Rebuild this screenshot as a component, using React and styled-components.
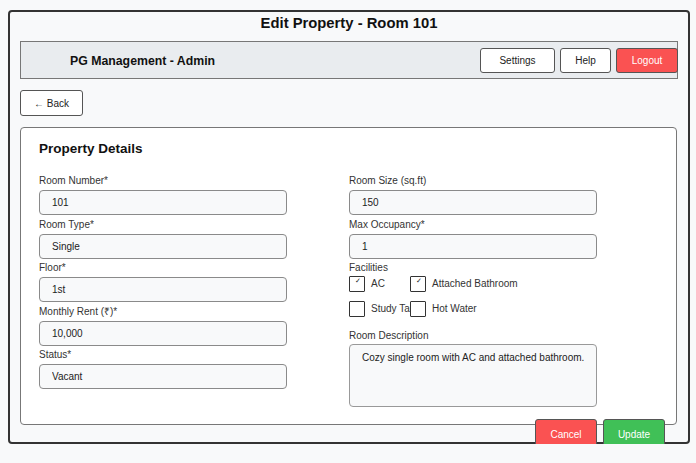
import React from "react";
import styled, { createGlobalStyle } from "styled-components";

const GlobalStyle = createGlobalStyle`
  body {
    margin: 0;
    background: #f8f9fa;
    font-family: "Liberation Sans", Arial, sans-serif;
    color: #222;
  }
`;

const Frame = styled.div`
  box-sizing: border-box;
  width: 682px;
  height: 434px;
  margin: 10px 0 0 8px;
  padding: 0 10px;
  border: 2px solid #333;
  border-radius: 4px;
  background: #f8f9fa;
`;

const Title = styled.h1`
  margin: 0;
  padding: 2px 0 9px;
  font-size: 14.8px;
  line-height: 18px;
  font-weight: 700;
  text-align: center;
  color: #111;
`;

const HeaderBar = styled.div`
  box-sizing: border-box;
  height: 38px;
  display: flex;
  align-items: center;
  justify-content: space-between;
  padding-left: 49px;
  background: #e9ecef;
  border: 1px solid #777;
`;

const Brand = styled.div`
  font-size: 12.3px;
  font-weight: 700;
  color: #111;
  margin-top: 2px;
`;

const Nav = styled.div`
  display: flex;
  gap: 5px;
  margin-right: -1px;
`;

const Button = styled.button`
  box-sizing: border-box;
  width: ${(p) => p.$w}px;
  height: ${(p) => p.$h || 25}px;
  padding: 0;
  border: 1px solid #555;
  border-radius: 3px;
  background: ${(p) => p.$bg || "#fff"};
  color: ${(p) => (p.$bg ? "#fff" : "#222")};
  font-family: "Liberation Sans", Arial, sans-serif;
  font-size: 10px;
  cursor: pointer;
`;

const BackRow = styled.div`
  padding: 11px 0;
`;

const Card = styled.div`
  box-sizing: border-box;
  margin-right: 1px;
  padding: 12px 18px 17px;
  background: #fff;
  border: 1px solid #777;
  border-radius: 4px;
`;

const CardTitle = styled.h2`
  margin: 0 0 18px;
  font-size: 13.5px;
  line-height: 17px;
  font-weight: 700;
  color: #111;
`;

const Grid = styled.div`
  display: grid;
  grid-template-columns: 248px 248px;
  column-gap: 62px;
  align-items: start;
`;

const Column = styled.div`
  display: flex;
  flex-direction: column;
`;

const Field = styled.div`
  display: flex;
  flex-direction: column;
  margin-bottom: ${(p) => (p.$after !== undefined ? p.$after : 3.5)}px;
`;

const Label = styled.label`
  font-size: 10px;
  line-height: 12px;
  color: #333;
  margin-bottom: ${(p) => (p.$gap !== undefined ? p.$gap : 3)}px;
`;

const Input = styled.input`
  box-sizing: border-box;
  width: 100%;
  height: 25px;
  padding: 0 12px;
  border: 1px solid #8a8a8a;
  border-radius: 4px;
  background: #f8f9fa;
  font-family: "Liberation Sans", Arial, sans-serif;
  font-size: 10px;
  color: #222;
  outline: none;
`;

const TextArea = styled.textarea`
  box-sizing: border-box;
  width: 100%;
  height: 63px;
  padding: 7px 2px 7px 12px;
  border: 1px solid #999;
  border-radius: 4px;
  background: #f8f9fa;
  font-family: "Liberation Sans", Arial, sans-serif;
  font-size: 10px;
  line-height: 12px;
  color: #222;
  resize: none;
  outline: none;
  overflow: hidden;
`;

const CheckGrid = styled.div`
  display: grid;
  grid-template-columns: 61px 61px;
  row-gap: 9px;
`;

const CheckItem = styled.div`
  display: flex;
  align-items: center;
  gap: 6px;
  white-space: nowrap;
  font-size: 10px;
  line-height: 12px;
  color: #333;
`;

const Box = styled.span`
  box-sizing: border-box;
  flex: none;
  width: 16px;
  height: 16px;
  display: flex;
  justify-content: center;
  align-items: flex-start;
  padding: 1px 0 0 2px;
  border: 1px solid #333;
  border-radius: 1px;
  background: #fff;
  font-family: "DejaVu Sans", sans-serif;
  font-size: 7px;
  line-height: 7px;
  color: #222;
`;

const Actions = styled.div`
  display: flex;
  justify-content: flex-end;
  gap: 6px;
  margin-top: -6px;
  padding-right: 13px;
`;

const leftFields = [
  ["Room Number*", "101"],
  ["Room Type*", "Single"],
  ["Floor*", "1st"],
  ["Monthly Rent (₹)*", "10,000"],
  ["Status*", "Vacant"],
];

const facilities = [
  ["AC", true],
  ["Attached Bathroom", true],
  ["Study Table", false],
  ["Hot Water", false],
];

const App = () => {
  return (
    <>
      <GlobalStyle />
      <Frame>
        <Title>Edit Property - Room 101</Title>
        <HeaderBar>
          <Brand>PG Management - Admin</Brand>
          <Nav>
            <Button $w={75}>Settings</Button>
            <Button $w={51}>Help</Button>
            <Button $w={62} $bg="#fa5252">Logout</Button>
          </Nav>
        </HeaderBar>
        <BackRow>
          <Button $w={63} $h={26}>← Back</Button>
        </BackRow>
        <Card>
          <CardTitle>Property Details</CardTitle>
          <Grid>
            <Column>
              {leftFields.map(([label, value]) => (
                <Field key={label}>
                  <Label>{label}</Label>
                  <Input defaultValue={value} readOnly />
                </Field>
              ))}
            </Column>
            <Column>
              <Field>
                <Label>Room Size (sq.ft)</Label>
                <Input defaultValue="150" readOnly />
              </Field>
              <Field>
                <Label>Max Occupancy*</Label>
                <Input defaultValue="1" readOnly />
              </Field>
              <Field $after={13}>
                <Label $gap={2}>Facilities</Label>
                <CheckGrid>
                  {facilities.map(([name, on]) => (
                    <CheckItem key={name}>
                      <Box>{on ? "✓" : ""}</Box>
                      {name}
                    </CheckItem>
                  ))}
                </CheckGrid>
              </Field>
              <Field $after={0}>
                <Label $gap={2}>Room Description</Label>
                <TextArea
                  defaultValue="Cozy single room with AC and attached bathroom."
                  readOnly
                />
              </Field>
            </Column>
          </Grid>
        </Card>
        <Actions>
          <Button $w={62} $h={31} $bg="#fa5252">Cancel</Button>
          <Button $w={62} $h={31} $bg="#40c057">Update</Button>
        </Actions>
      </Frame>
    </>
  );
};

export default App;
